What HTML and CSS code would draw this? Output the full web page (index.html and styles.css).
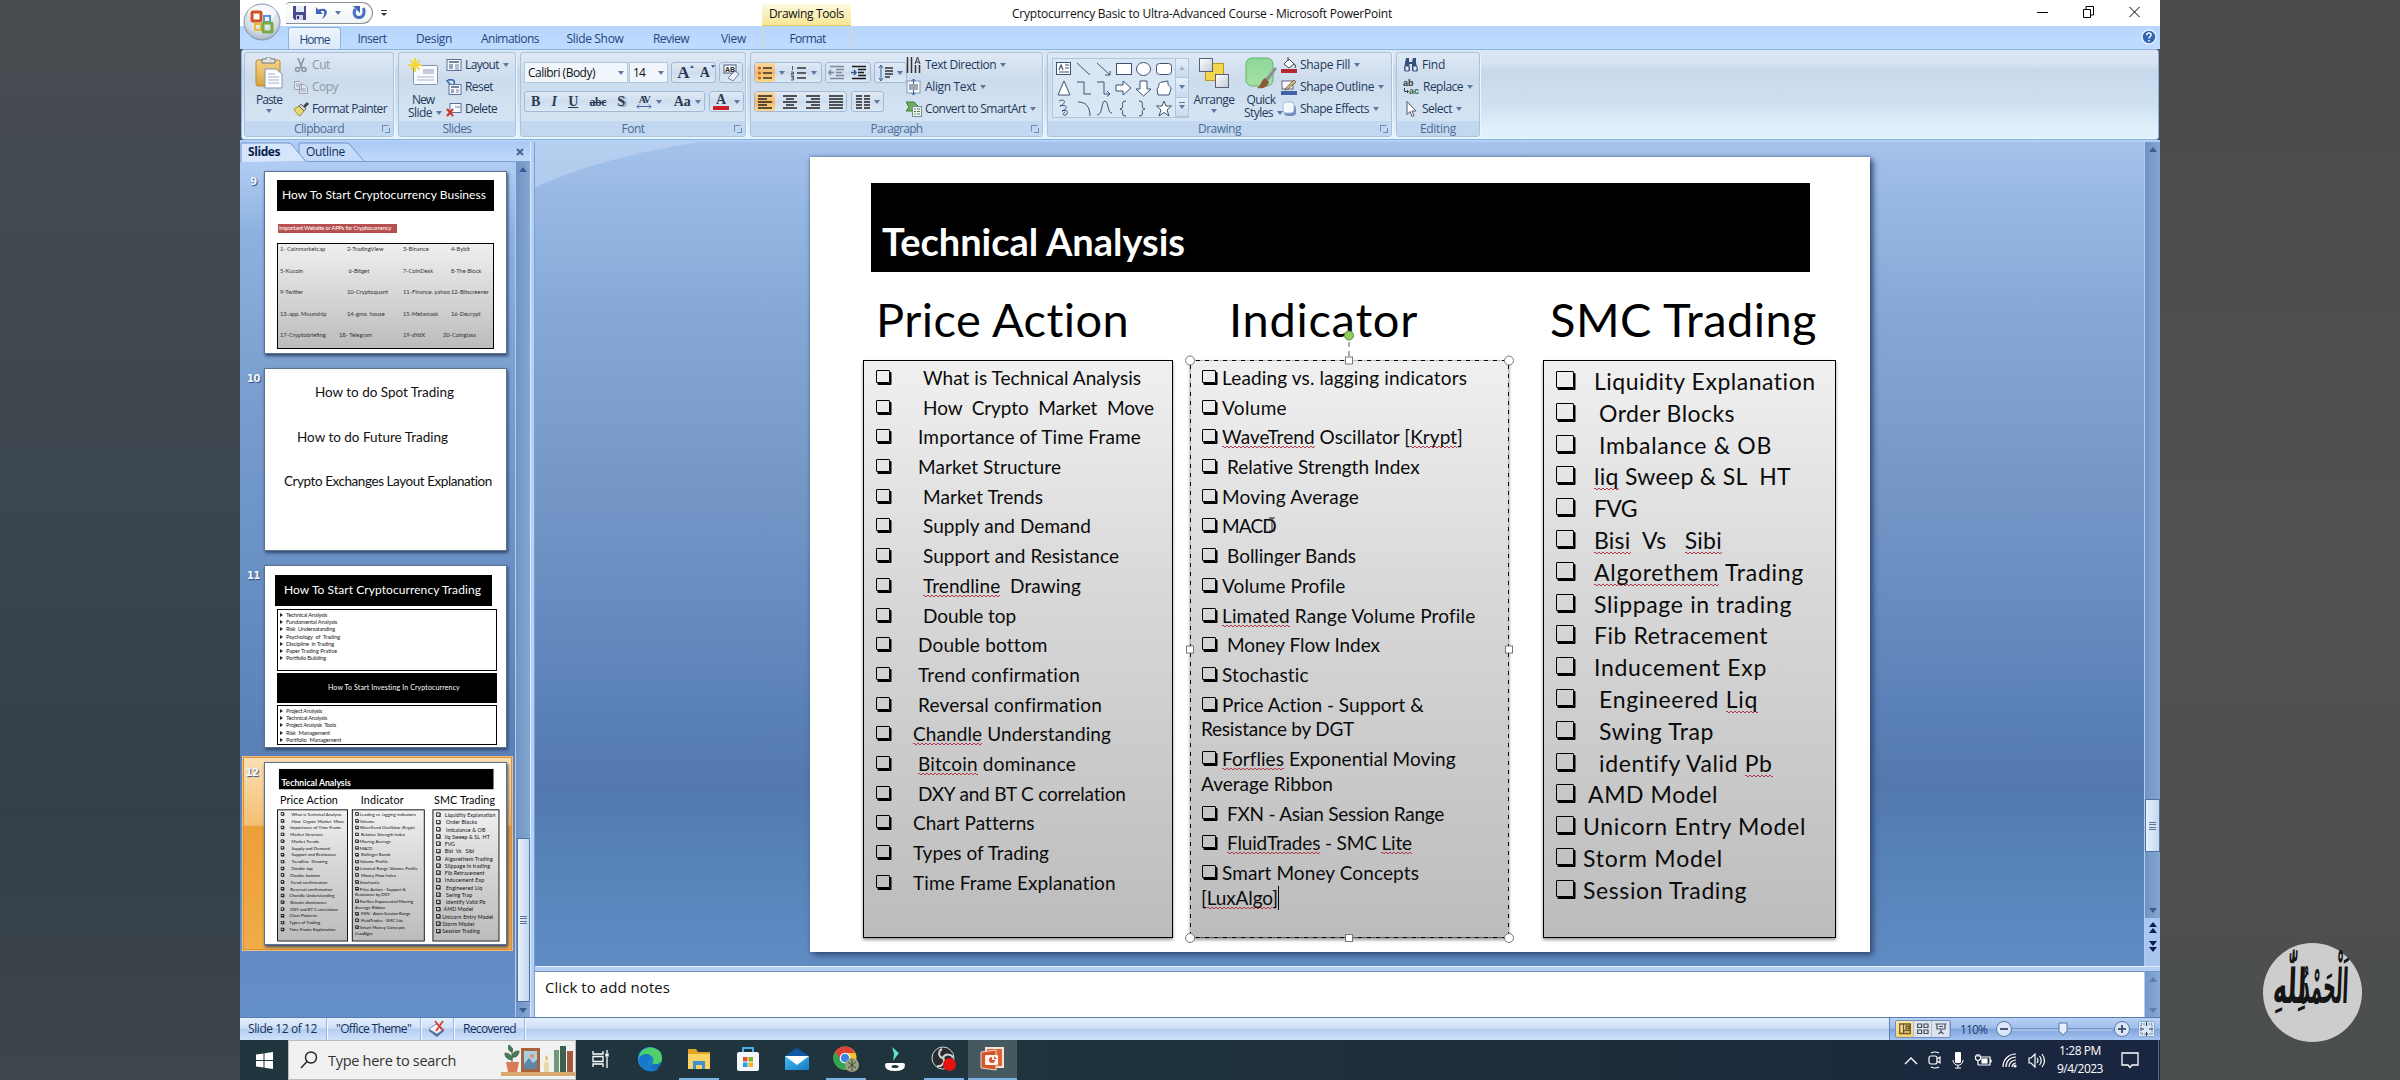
FILE: index.html
```html
<!DOCTYPE html>
<html lang="en">
<head>
<meta charset="utf-8">
<title>Cryptocurrency Basic to Ultra-Advanced Course - Microsoft PowerPoint</title>
<link rel="stylesheet" href="styles.css">
</head>
<body>
<svg width="0" height="0" class="defs">
  <defs>
    <linearGradient id="gGold" x1="0" y1="0" x2="0" y2="1"><stop offset="0" stop-color="#f3d58a"/><stop offset="1" stop-color="#d9a33c"/></linearGradient>
    <linearGradient id="gGreen" x1="0" y1="0" x2="0" y2="1"><stop offset="0" stop-color="#8fd79b"/><stop offset="1" stop-color="#a6e0a2"/></linearGradient>
    <radialGradient id="gOrb" cx=".5" cy=".3" r=".8"><stop offset="0" stop-color="#fff"/><stop offset=".6" stop-color="#d6dde8"/><stop offset="1" stop-color="#8fa2bd"/></radialGradient>
    <linearGradient id="gEdge" x1="0" y1="0" x2="1" y2="1"><stop offset="0" stop-color="#2fb6e8"/><stop offset="1" stop-color="#0b59a8"/></linearGradient>
    <linearGradient id="gMail" x1="0" y1="0" x2="1" y2="1"><stop offset="0" stop-color="#43c0f4"/><stop offset="1" stop-color="#1878c9"/></linearGradient>
    <linearGradient id="gFill" x1="0" y1="0" x2="1" y2="1"><stop offset="0" stop-color="#fff"/><stop offset="1" stop-color="#c3cbd8"/></linearGradient>
  </defs>
</svg>
<div class="stage">
<div class="side side-left"></div>
<div class="screen">

  <header class="titlebar">
    <div class="qat">
      <svg width="16" height="16" viewBox="0 0 16 16"><path d="M1 1h13v14H3l-2-2z" fill="#4b4a8f"/><rect x="4" y="1" width="8" height="6" fill="#e6ecf8"/><rect x="4" y="10" width="7" height="5" fill="#cfd5e6"/><rect x="5" y="11" width="2" height="3" fill="#3b3a78"/></svg>
      <svg width="16" height="16" viewBox="0 0 16 16"><path d="M2 2v7h7L6.500 6.500C10 4 12 8 8 14c7-4 7-13-3.800-9.500z" fill="#3f66b8"/></svg>
      <i class="dd"></i>
      <svg width="16" height="16" viewBox="0 0 16 16"><path d="M4.500 4C2 7 3 12.500 8 12.500S14 7 12.500 3" fill="none" stroke="#4a6fbb" stroke-width="3"/><path d="M2 1h7v7z" fill="#3f66b8"/></svg>
    </div>
    <i class="qat-more"></i>
    <div class="context-title"><span data-w="75">Drawing Tools</span></div>
    <div class="doc-title"><span data-w="380">Cryptocurrency Basic to Ultra-Advanced Course - Microsoft PowerPoint</span></div>
    <div class="winbtns">
      <svg width="12" height="12"><path d="M0 6.500h11" stroke="#000"/></svg>
      <svg width="12" height="12" fill="none" stroke="#000"><path d="M.5 3.500h7v8h-7zM3 3V.5h7.500v8.500H8"/></svg>
      <svg width="12" height="12" fill="none" stroke="#000"><path d="M.5 1l10 10M10.500 1l-10 10"/></svg>
    </div>
    <svg class="office" width="38" height="38" viewBox="0 0 38 38"><circle cx="19" cy="19" r="18" fill="url(#gOrb)" stroke="#8394ad"/><ellipse cx="19" cy="10" rx="14" ry="8" fill="#fff" opacity=".6"/><g fill="none" stroke-width="3"><rect x="9" y="9" width="9" height="9" rx="1" stroke="#cf5327"/><rect x="21" y="13" width="6" height="6" stroke="#5b97d6" stroke-width="2"/><rect x="12" y="21" width="6" height="6" stroke="#e9b93b" stroke-width="2"/><rect x="20" y="20" width="9" height="9" rx="1" stroke="#79ab42"/></g></svg>
  </header>

  <nav class="tabs">
    <div class="tab active t1"><span data-w="30">Home</span></div>
    <div class="tab t2"><span data-w="29">Insert</span></div>
    <div class="tab t3"><span data-w="36">Design</span></div>
    <div class="tab t4"><span data-w="58">Animations</span></div>
    <div class="tab t5"><span data-w="57">Slide Show</span></div>
    <div class="tab t6"><span data-w="36">Review</span></div>
    <div class="tab t7"><span data-w="25">View</span></div>
    <div class="tab t8"><span data-w="36">Format</span></div>
    <svg class="help" width="16" height="16" viewBox="0 0 16 16"><circle cx="8" cy="8" r="7" fill="#3566b0" stroke="#e6f0fc" stroke-width="1.500"/><path d="M5.800 6.200c0-3 4.600-2.800 4.300-.2C10 7.500 8 7.500 8 9.500M8 11v1.500" stroke="#fff" stroke-width="1.500" fill="none"/></svg>
  </nav>

  <section class="ribbon">
    <div class="group g-clip">
      <div class="body">
        <div class="big">
          <svg width="28" height="32" viewBox="0 0 28 32"><rect x="1" y="3" width="24" height="26" rx="2" fill="url(#gGold)" stroke="#b98a3a"/><path d="M7 6V2h4c0-3 5-3 5 0h4v4z" fill="#dfe3e8" stroke="#777"/><path d="M10 12h11l6 5v14H10z" fill="#fff" stroke="#8395b5"/><path d="M13 17h7M13 20h11M13 23h11M13 26h11" stroke="#9db1d2"/></svg>
          <span data-w="26">Paste</span><i class="dd"></i>
        </div>
        <div class="col">
          <div class="cmd off"><svg width="16" height="16" viewBox="0 0 16 16" fill="none" stroke="#8d93a3" stroke-width="1.600"><path d="M5 1l4 10M11 1L7 11"/><circle cx="4.500" cy="12.500" r="2"/><circle cx="11" cy="12.500" r="2"/></svg><span data-w="18">Cut</span></div>
          <div class="cmd off"><svg width="16" height="16" viewBox="0 0 16 16" fill="#e2e7ef" stroke="#9aa1b0"><path d="M1.500 2.500h5l2 2v6h-7zM6.500 5.500h5l3 3v6h-8z"/><path d="M8 10h5M8 12h5M3 5h3M3 7h3"/></svg><span data-w="26">Copy</span></div>
          <div class="cmd"><svg width="16" height="16" viewBox="0 0 16 16"><path d="M1 8l5-3 5 5-4 5c-2-1-4-3-6-7z" fill="#e9d86a" stroke="#8a7a2a" stroke-width=".8"/><path d="M6 5l2-2 5 5-2 2z" fill="#cfd4dd" stroke="#555" stroke-width=".8"/><path d="M10 5l4-4 2 2-4 4z" fill="#444"/></svg><span data-w="75">Format Painter</span></div>
        </div>
      </div>
      <div class="cap"><span data-w="50">Clipboard</span><b class="launch"></b></div>
    </div>

    <div class="group g-slides">
      <div class="body">
        <div class="big">
          <svg width="32" height="32" viewBox="0 0 32 32"><rect x="6.500" y="8.500" width="24" height="19" rx="1" fill="#f8fafd" stroke="#7f92b4"/><rect x="16" y="12" width="11" height="5" fill="#c5cbd8"/><path d="M10 20h17M10 23h17" stroke="#a9b4c8"/><path d="M8 1v14M1 8h14M3.500 3.500l9 9M12.500 3.500l-9 9" stroke="#f2d83c" stroke-width="2"/></svg>
          <span data-w="22">New</span><div class="row"><span data-w="24">Slide</span><i class="dd"></i></div>
        </div>
        <div class="col">
          <div class="cmd"><svg width="16" height="16" viewBox="0 0 16 16"><rect x="1" y="2.500" width="14" height="11" fill="#f6f8fc" stroke="#5f7396"/><path d="M3 5h10" stroke="#4a5f86" stroke-width="1.500"/><rect x="3" y="7" width="4" height="5" fill="#9aa7bf"/><path d="M9 8h4M9 10h4M9 12h4" stroke="#7385a5"/></svg><span data-w="34">Layout</span><i class="dd"></i></div>
          <div class="cmd"><svg width="16" height="16" viewBox="0 0 16 16"><rect x="3" y="5.500" width="12" height="10" fill="#f6f8fc" stroke="#5f7396"/><path d="M5 8h8" stroke="#4a5f86" stroke-width="1.500"/><rect x="5" y="10" width="3" height="4" fill="#9aa7bf"/><path d="M10 11h3M10 13h3" stroke="#7385a5"/><path d="M3 1C8 0 9 2 8 5M4 0L1 2l3 3" stroke="#3a62a8" stroke-width="1.500" fill="none"/></svg><span data-w="28">Reset</span></div>
          <div class="cmd"><svg width="16" height="16" viewBox="0 0 16 16"><rect x="4" y="2.500" width="11" height="9" fill="#f6f8fc" stroke="#5f7396"/><path d="M9 6h5" stroke="#7385a5"/><path d="M1 8l6 7M7 8l-6 7" stroke="#d3342b" stroke-width="2"/></svg><span data-w="32">Delete</span></div>
        </div>
      </div>
      <div class="cap"><span data-w="29">Slides</span></div>
    </div>

    <div class="group g-font">
      <div class="body stack">
        <div class="row r1">
          <div class="combo c-name"><span data-w="67">Calibri (Body)</span><i class="dd"></i></div>
          <div class="combo c-size"><span data-w="12">14</span><i class="dd"></i></div>
          <div class="bg bg-a"><b class="ser a1">A<i class="up"></i></b><b class="ser a2">A<i class="up dn"></i></b></div>
          <div class="bg bg-clr"><svg width="18" height="18" viewBox="0 0 18 18"><rect x="1" y="1" width="12" height="8" fill="#fff" stroke="#445a80"/><text x="2" y="8" class="tinyAa">AB</text><path d="M5 14l7-7 4 3-6 7z" fill="#eef2f8" stroke="#6b7fa3"/></svg></div>
        </div>
        <div class="row r2">
          <div class="bg bg-style">
            <b class="ser">B</b><b class="ser it">I</b><b class="ser un">U</b><b class="ser st">abc</b><b class="ser sh">S</b>
            <div class="av"><b class="ser">AV</b><svg width="16" height="5"><path d="M3 .5L1 2.500l2 2M13 .5l2 2-2 2M1 2.500h14" stroke="#3f66a8" fill="none"/></svg></div><i class="dd"></i>
            <b class="ser aa">Aa</b><i class="dd"></i>
          </div>
          <div class="bg bg-color"><div class="fc"><b class="ser">A</b></div><i class="dd"></i></div>
        </div>
      </div>
      <div class="cap"><span data-w="23">Font</span><b class="launch"></b></div>
    </div>

    <div class="group g-para">
      <div class="body">
        <div class="stack">
          <div class="row r1">
            <div class="bg p1"><div class="hot"><svg width="16" height="16" viewBox="0 0 16 16"><path d="M6 3h9M6 8h9M6 13h9" stroke="#333" stroke-width="1.500"/><g fill="#b4682a"><circle cx="2.500" cy="3" r="1.600"/><circle cx="2.500" cy="8" r="1.600"/><circle cx="2.500" cy="13" r="1.600"/></g></svg></div><i class="dd"></i><svg width="17" height="16" viewBox="0 0 17 16"><path d="M7 3h9M7 8h9M7 13h9" stroke="#333" stroke-width="1.500"/><path d="M2.500 1v4M1 7h2.500v1.500H1.500V10H4M1 11.500h2.500V15H1M1.500 13h2" stroke="#445" fill="none" stroke-width=".9"/></svg><i class="dd"></i></div>
            <div class="bg p2"><svg width="18" height="16" viewBox="0 0 18 16" stroke="#7e8899"><path d="M2 1.500h14M8 4.500h8M8 7.500h6M8 10.500h8M2 13.500h14" stroke-width="1.300"/><path d="M6 7.500H1M3 5L1 7.500 3 10" fill="none" stroke-width="1.500"/></svg><svg width="18" height="16" viewBox="0 0 18 16" stroke="#1a1a1a"><path d="M2 1.500h14M8 4.500h8M8 7.500h6M8 10.500h8M2 13.500h14" stroke-width="1.500"/><path d="M1 7.500h5M4 5l2 2.500L4 10" fill="none" stroke="#33558f" stroke-width="1.500"/></svg></div>
            <div class="bg p3"><svg width="16" height="18" viewBox="0 0 16 18"><path d="M3 2v14M1 4l2-3 2 3M1 14l2 3 2-3" stroke="#3f5f96" fill="none"/><path d="M7 4h8M7 7h8M7 10h8M7 13h5" stroke="#333" stroke-width="1.500"/></svg><i class="dd"></i></div>
          </div>
          <div class="row r2">
            <div class="bg p4"><div class="hot"><svg width="16" height="16" stroke="#222" stroke-width="1.500"><path d="M1 2h14M1 5h9M1 8h14M1 11h9M1 14h14"/></svg></div><svg width="16" height="16" stroke="#222" stroke-width="1.500"><path d="M1 2h14M4 5h8M1 8h14M4 11h8M1 14h14"/></svg><svg width="16" height="16" stroke="#222" stroke-width="1.500"><path d="M1 2h14M6 5h9M1 8h14M6 11h9M1 14h14"/></svg><svg width="16" height="16" stroke="#222" stroke-width="1.500"><path d="M1 2h14M1 5h14M1 8h14M1 11h14M1 14h14"/></svg></div>
            <div class="bg p5"><svg width="15" height="16" stroke="#222" stroke-width="1.500"><path d="M1 2h6M1 5h6M1 8h6M1 11h6M1 14h6M9 2h6M9 5h6M9 8h6M9 11h6M9 14h6"/></svg><i class="dd"></i></div>
          </div>
        </div>
        <div class="col">
          <div class="cmd"><svg width="16" height="16" viewBox="0 0 16 16"><path d="M1.500 0v16M5.500 0v16M9.500 8v8M13.500 8v8" stroke="#333" stroke-width="1.500"/><path d="M9 7l2.500-7L14 7M10 5h3" stroke="#333" fill="none"/></svg><span data-w="71">Text Direction</span><i class="dd"></i></div>
          <div class="cmd"><svg width="16" height="16" viewBox="0 0 16 16"><rect x="1" y="2" width="13" height="12" fill="#f6f8fc" stroke="#8395b5"/><path d="M3 6h9M3 8h9M3 10h9" stroke="#456"/><path d="M7.500 0v5M5.500 2l2-2 2 2M7.500 16v-5M5.500 14l2 2 2-2" stroke="#3f5f96" fill="none"/></svg><span data-w="51">Align Text</span><i class="dd"></i></div>
          <div class="cmd"><svg width="16" height="16" viewBox="0 0 16 16"><path d="M0 1h8l4 4-4 5H0l3-4z" fill="#6fae5a" stroke="#3f7a35"/><rect x="6.500" y="5.500" width="9" height="10" fill="#f2f7f0" stroke="#7a8a9c"/><path d="M8 8h2M11 8h3M8 10.500h2M11 10.500h3M8 13h2M11 13h3" stroke="#4d8a45"/></svg><span data-w="101">Convert to SmartArt</span><i class="dd"></i></div>
        </div>
      </div>
      <div class="cap"><span data-w="52">Paragraph</span><b class="launch"></b></div>
    </div>

    <div class="group g-draw">
      <div class="body">
        <div class="gallery">
          <svg width="122" height="59" viewBox="0 0 122 59" fill="none" stroke="#3c5274">
            <rect x="3.500" y="3.500" width="14" height="12" fill="#fff"/><path d="M6 11l2-5 2 5M12 6h4M12 9h4M6 13h10" stroke-width="1.200"/>
            <path d="M24 4l13 12M44 4l13 12M57 12v4h-5"/>
            <g fill="#fff"><rect x="63.500" y="4.500" width="15" height="11"/><ellipse cx="90.500" cy="10" rx="7" ry="6.500"/><rect x="103.500" y="4.500" width="15" height="11" rx="3"/>
            <path d="M11 22l6 14H5zM63 26h7v-4l8 7-8 7v-4h-7zM87 22h7v8h4l-7.500 7-7.500-7h4zM104 30c3-2 0-6 5-7l6-1c-1 5 3 5 3 8l-2 6h-11z"/></g>
            <path d="M24 23h7v12h7M44 23h7v12h6M54 32l3 3-3 2.500"/>
            <path d="M6 42c6-3 8 2 1 5 7-2 9 2 2 5 5-2 7 1 4 4-3 1-4-2-1-3M25 43c8 0 12 5 12 14M44 56c6 0 4-14 8-14 4 1 2 12 7 12M73 42c-7 0 0 7-6 8 6 1-1 7 6 7M86 42c7 0 0 7 6 8-6 1 1 7-6 7"/>
            <path d="M111 42l2 5h5.500l-4.500 4 2 6-5-3.500-5 3.500 2-6-4.500-4h5.500z" fill="#fff"/>
          </svg>
          <div class="gscroll"><div><i class="ga"></i></div><div><i class="dd"></i></div><div><i class="dd bar"></i></div></div>
        </div>
        <div class="big arr">
          <svg width="32" height="32" viewBox="0 0 32 32"><rect x="7.500" y="6.500" width="18" height="17" fill="#f3d64a" stroke="#b89a20"/><rect x="1.500" y="1.500" width="13" height="13" fill="url(#gFill)" stroke="#56627a"/><rect x="17.500" y="17.500" width="13" height="13" fill="url(#gFill)" stroke="#56627a"/></svg>
          <span data-w="41">Arrange</span><i class="dd"></i>
        </div>
        <div class="big qs">
          <svg width="32" height="32" viewBox="0 0 32 32"><rect x="1" y="1" width="27" height="28" rx="6" fill="url(#gGreen)" stroke="#62b26b"/><path d="M30 10l2 2-9 12-3-2z" fill="#8b8f96"/><path d="M20 21l4 4c-2 6-7 7-12 6 4-2 4-8 8-10z" fill="#8a5a35"/></svg>
          <span data-w="29">Quick</span><div class="row"><span data-w="29">Styles</span><i class="dd"></i></div>
        </div>
        <div class="col">
          <div class="cmd"><svg width="16" height="16" viewBox="0 0 16 16"><path d="M3 7l5-5 5 5-5 4z" fill="#fff" stroke="#445"/><path d="M7 4V0M13 7c2 1 2 3 1 4" stroke="#445" fill="none"/><rect x="0" y="12" width="16" height="4" fill="#b5282e"/></svg><span data-w="50">Shape Fill</span><i class="dd"></i></div>
          <div class="cmd"><svg width="16" height="16" viewBox="0 0 16 16"><rect x="1" y="2" width="11" height="8" fill="#f6f8fc" stroke="#667"/><path d="M5 9l8-8 2 2-8 7-3 1z" fill="#e2b765" stroke="#555" stroke-width=".8"/><rect x="0" y="12" width="16" height="4" fill="#3f64a6"/></svg><span data-w="74">Shape Outline</span><i class="dd"></i></div>
          <div class="cmd"><svg width="16" height="16" viewBox="0 0 16 16"><rect x="3" y="4" width="12" height="11" rx="4" fill="#6d8dbf"/><rect x="2" y="1" width="11" height="11" rx="3" fill="#f4f8fd" stroke="#a8bad6"/></svg><span data-w="69">Shape Effects</span><i class="dd"></i></div>
        </div>
      </div>
      <div class="cap"><span data-w="43">Drawing</span><b class="launch"></b></div>
    </div>

    <div class="group g-edit">
      <div class="body">
        <div class="col">
          <div class="cmd"><svg width="16" height="16" viewBox="0 0 16 16"><path d="M3 1h3v4l1 9H1l1-8zM10 1h3v5l2 8H9V5z" fill="#35507e"/><path d="M2 9h4v5H2zM10 9h4v5h-4z" fill="#dfe8f5" stroke="#35507e"/><path d="M6 6h4" stroke="#35507e" stroke-width="2"/></svg><span data-w="23">Find</span></div>
          <div class="cmd"><svg width="17" height="16" viewBox="0 0 17 16"><text x="0" y="7" class="ab">ab</text><text x="6" y="15" class="ab g">ac</text><path d="M1.500 9v3.500h4M4 11l1.500 1.500L4 14" stroke="#345" fill="none"/></svg><span data-w="40">Replace</span><i class="dd"></i></div>
          <div class="cmd"><svg width="16" height="16" viewBox="0 0 16 16"><path d="M4 .5v13l3-3 2 5 2-1-2-4.500h4z" fill="#fff" stroke="#556"/></svg><span data-w="30">Select</span><i class="dd"></i></div>
        </div>
      </div>
      <div class="cap"><span data-w="36">Editing</span></div>
    </div>
  </section>

  <main class="work">
    <aside class="pane">
      <div class="pane-tabs">
        <svg class="ptbg" width="130" height="20" viewBox="0 0 130 20"><path d="M59 19V3q0-2 2-2h45q3 0 5 3l13 15" fill="#c3dafa" stroke="#7296cb"/><path d="M1 20V3q0-2 2-2h45q3 0 5 3l13 15.500" fill="#d5e5fb" stroke="#7296cb"/></svg>
        <span class="pt-on" data-w="32">Slides</span><span class="pt-off" data-w="39">Outline</span>
        <svg class="pclose" width="8" height="8"><path d="M1 1l6 6M7 1L1 7" stroke="#4a6591" stroke-width="2"/></svg>
      </div>
      <div class="pane-body">
        <div class="thumbs">
          <div class="trow"><b class="num">9</b>
            <div class="thumb th9">
              <div class="tt"><span data-w="204">How To Start Cryptocurrency Business</span></div>
              <div class="red"><span data-w="112">Important Website or APPs for Cryptocurrency</span></div>
              <div class="grid9">
                <span>1- Coinmarketcap</span><span>2-TradingView</span><span>3-Binance</span><span>4-Bybit</span>
                <span>5-Kucoin</span><span>&nbsp;6-Bitget</span><span>7-CoinDesk</span><span>8-The Block</span>
                <span>9-Twitter</span><span>10-Cryptoquant</span><span>11-Finance. yahoo</span><span>12-Bitscreener</span>
                <span>13-app. Muunship</span><span>14-gmx. house</span><span>15-Metamask</span><span>16-Decrypt</span>
                <span>17-Cryptobriefing</span><span class="b1l">18- Telegram</span><span>19-dYdX</span><span class="b1l">20-Coinglass</span>
              </div>
            </div>
          </div>
          <div class="trow"><b class="num">10</b>
            <div class="thumb th10">
              <span class="l1" data-w="139">How to do Spot Trading</span>
              <span class="l2" data-w="151">How to do Future Trading</span>
              <span class="l3" data-w="208">Crypto Exchanges Layout Explanation</span>
            </div>
          </div>
          <div class="trow"><b class="num">11</b>
            <div class="thumb th11">
              <div class="tt"><span data-w="197">How To Start Cryptocurrency Trading</span></div>
              <ul class="ml"><li data-w="41">Technical Analysis</li><li data-w="51">Fundamental Analysis</li><li data-w="49">Risk  Undersatanding</li><li data-w="54">Psychology  of  Trading</li><li data-w="48">Discipline  in Trading</li><li data-w="51">Paper Trading Pratice</li><li data-w="40">Portfolio Building</li></ul>
              <div class="tt2"><span data-w="132">How To Start Investing In Cryptocurrency</span></div>
              <ul class="ml m2"><li data-w="36">Project Analysis</li><li data-w="41">Technical Analysis</li><li data-w="50">Project Analysis  Tools</li><li data-w="44">Risk  Management</li><li data-w="55">Portfolio  Management</li></ul>
            </div>
          </div>
          <div class="trow sel"><b class="num">12</b>
            <div class="thumb th12" id="mini"></div>
          </div>
        </div>
        <div class="vscroll pv"><i class="ar up2"></i><div class="vthumb"></div><i class="ar dn2"></i></div>
      </div>
    </aside>
    <div class="vsplit"></div>
    <section class="right">
      <div class="canvas">
        <svg class="swoosh" width="420" height="130" viewBox="0 0 420 130"><path d="M0 0H165C100 10 40 26 0 46z" fill="#d3e4fb" opacity=".4"/></svg>
        <div class="slide" id="slide">
          <div class="s-title"><span data-w="303">Technical Analysis</span></div>
          <div class="s-h h1"><span data-w="254">Price Action</span></div>
          <div class="s-h h2"><span data-w="189">Indicator</span></div>
          <div class="s-h h3"><span data-w="267">SMC Trading</span></div>
          <ul class="box b1">
            <li><i></i><span class="n3" data-w="218">What is Technical Analysis</span></li>
            <li><i></i><span class="n3" data-w="231">How  Crypto  Market  Move</span></li>
            <li><i></i><span class="n2" data-w="223">Importance of Time Frame</span></li>
            <li><i></i><span class="n2" data-w="143">Market Structure</span></li>
            <li><i></i><span class="n3" data-w="120">Market Trends</span></li>
            <li><i></i><span class="n3" data-w="168">Supply and Demand</span></li>
            <li><i></i><span class="n3" data-w="196">Support and Resistance</span></li>
            <li><i></i><span class="n3" data-w="158"><u>Trendline</u>  Drawing</span></li>
            <li><i></i><span class="n3" data-w="93">Double top</span></li>
            <li><i></i><span class="n2" data-w="129">Double bottom</span></li>
            <li><i></i><span class="n2" data-w="162">Trend confirmation</span></li>
            <li><i></i><span class="n2" data-w="184">Reversal confirmation</span></li>
            <li><i></i><span class="n1" data-w="198"><u>Chandle</u> Understanding</span></li>
            <li><i></i><span class="n2" data-w="158"><u>Bitcoin</u> dominance</span></li>
            <li><i></i><span class="n2" data-w="208">DXY and BT C correlation</span></li>
            <li><i></i><span class="n1" data-w="121">Chart Patterns</span></li>
            <li><i></i><span class="n1" data-w="136">Types of Trading</span></li>
            <li><i></i><span class="n1" data-w="203">Time Frame Explanation</span></li>
          </ul>
          <ul class="box b2">
            <li><i></i><span data-w="245">Leading vs. lagging indicators</span></li>
            <li><i></i><span data-w="65">Volume</span></li>
            <li><i></i><span data-w="241"><u>WaveTrend</u> Oscillator [<u>Krypt</u>]</span></li>
            <li><i></i><span class="n1" data-w="193">Relative Strength Index</span></li>
            <li><i></i><span data-w="137">Moving Average</span></li>
            <li><i></i><span data-w="54">MACD</span></li>
            <li><i></i><span class="n1" data-w="129">Bollinger Bands</span></li>
            <li><i></i><span data-w="123">Volume Profile</span></li>
            <li><i></i><span data-w="253"><u>Limated</u> Range Volume Profile</span></li>
            <li><i></i><span class="n1" data-w="153">Money Flow Index</span></li>
            <li><i></i><span data-w="87">Stochastic</span></li>
            <li><i></i><span data-w="202">Price Action - Support &amp;</span></li>
            <li class="cont"><span data-w="153">Resistance by DGT</span></li>
            <li><i></i><span data-w="234"><u>Forflies</u> Exponential Moving</span></li>
            <li class="cont"><span data-w="132">Average Ribbon</span></li>
            <li><i></i><span class="n1" data-w="217">FXN - Asian Session Range</span></li>
            <li><i></i><span class="n1" data-w="185"><u>FluidTrades</u> - SMC <u>Lite</u></span></li>
            <li><i></i><span data-w="197">Smart Money Concepts</span></li>
            <li class="cont"><span data-w="77">[<u>LuxAlgo</u>]</span><em class="caret"></em></li>
          </ul>
          <ul class="box b3">
            <li><i></i><span class="n3" data-w="222">Liquidity Explanation</span></li>
            <li><i></i><span class="n4" data-w="136">Order Blocks</span></li>
            <li><i></i><span class="n4" data-w="173">Imbalance &amp; OB</span></li>
            <li><i></i><span class="n3" data-w="197"><u>liq</u> Sweep &amp; SL  HT</span></li>
            <li><i></i><span class="n3" data-w="43">FVG</span></li>
            <li><i></i><span class="n3" data-w="128"><u>Bisi</u>  Vs   <u>Sibi</u></span></li>
            <li><i></i><span class="n3" data-w="210"><u>Algorethem</u> Trading</span></li>
            <li><i></i><span class="n3" data-w="198">Slippage in trading</span></li>
            <li><i></i><span class="n3" data-w="174">Fib Retracement</span></li>
            <li><i></i><span class="n3" data-w="173">Inducement Exp</span></li>
            <li><i></i><span class="n4" data-w="159">Engineered <u>Liq</u></span></li>
            <li><i></i><span class="n4" data-w="115">Swing Trap</span></li>
            <li><i></i><span class="n4" data-w="174">identify Valid <u>Pb</u></span></li>
            <li><i></i><span class="n2" data-w="130">AMD Model</span></li>
            <li><i></i><span data-w="223">Unicorn Entry Model</span></li>
            <li><i></i><span data-w="140">Storm Model</span></li>
            <li><i></i><span data-w="164">Session Trading</span></li>
          </ul>
          <svg class="handles" width="340" height="620" viewBox="0 0 340 620">
            <path d="M170 30V12" stroke="#555" stroke-dasharray="5 4"/>
            <path d="M12 34.500h317M12 612h317" stroke="#bbb" stroke-dasharray="5 4"/>
            <path d="M11.500 34v578M329.500 34v578" stroke="#bbb" stroke-dasharray="5 4"/>
            <g fill="#fff" stroke="#777"><circle cx="11" cy="34.500" r="4.500"/><circle cx="330" cy="34.500" r="4.500"/><circle cx="11" cy="612" r="4.500"/><circle cx="330" cy="612" r="4.500"/><rect x="166.500" y="31" width="7" height="7"/><rect x="166.500" y="608.500" width="7" height="7"/><rect x="7.500" y="320" width="7" height="7"/><rect x="326.500" y="320" width="7" height="7"/></g>
            <circle cx="170" cy="9.500" r="4.500" fill="#8fce5a" stroke="#5f8a4a"/>
            <path d="M90 192h6M93 192v13M90 205h6" stroke="#222" fill="none"/>
          </svg>
        </div>
      </div>
      <div class="vscroll mv"><i class="ar up2"></i><div class="vthumb"></div><i class="ar dn2"></i><div class="nav"><svg width="12" height="36" viewBox="0 0 12 36" fill="#0c1c4c"><path d="M6 3l4 5H2zM6 9l4 5H2zM2 22h8l-4 5zM2 28h8l-4 5z"/></svg></div></div>
      <div class="hsplit"></div>
      <div class="notes"><span data-w="125">Click to add notes</span></div>
      <div class="vscroll nv"><i class="ar up2"></i><i class="ar dn2"></i></div>
    </section>
  </main>

  <footer class="status">
    <div class="s1"><span data-w="69">Slide 12 of 12</span></div>
    <div class="s2"><span data-w="75">"Office Theme"</span></div>
    <div class="s3"><svg width="18" height="18" viewBox="0 0 18 18"><path d="M1 9l8 5 7-5v2l-7 6-8-6z" fill="#4e6ea5"/><path d="M1 9l7-5 8 5-7 5z" fill="#f4f6fa" stroke="#7f8fae"/><path d="M7 1l8 10M15 1L8 11" stroke="#d5402f" stroke-width="1.800"/></svg></div>
    <div class="s4"><span data-w="53">Recovered</span></div>
    <div class="s5">
      <div class="views"><div class="von"><svg width="12" height="12" fill="none" stroke="#6b5a2c" stroke-width="1.300"><path d="M.7 1h10.600v9.500H.7zM4.500 1v9.500M4.500 7.500h6.800M7 3h3v2.500H7z"/></svg></div><div><svg width="12" height="12" fill="none" stroke="#4a5260" stroke-width="1.200"><path d="M.6 1h4v3.500h-4zM7 1h4v3.500H7zM.6 7h4v3.500h-4zM7 7h4v3.500H7z"/></svg></div><div><svg width="12" height="12" fill="none" stroke="#4a5260" stroke-width="1.200"><path d="M.5 1h11M2 1v5h8V1M4 3.500h4M6 6v4M3.500 11L6 8.500 8.500 11"/></svg></div></div>
      <span class="pct" data-w="27">110%</span>
      <svg width="136" height="20" viewBox="0 0 136 20"><path d="M17 10h100" stroke="#5a7cb5"/><path d="M17 11h100" stroke="#d6e5fb"/><g fill="#dbe7f7" stroke="#5d779f"><circle cx="9" cy="10" r="7.500"/><circle cx="127" cy="10" r="7.500"/></g><path d="M5 10h8M123 10h8M127 6v8" stroke="#44587c" stroke-width="2"/><path d="M64 4h8v8l-4 4-4-4z" fill="#e8f0fb" stroke="#5d779f"/></svg>
      <svg class="fitico" width="17" height="17" viewBox="0 0 17 17"><rect x=".5" y=".5" width="16" height="15" rx="1" fill="#d8e6fa" stroke="#8ba6cf"/><rect x="3" y="3" width="11" height="10" fill="none" stroke="#334" stroke-dasharray="1 1.500"/><path d="M8.500 1v4M8.500 11v4M2 8h4M11 8h4" stroke="#334"/></svg>
    </div>
  </footer>

  <div class="taskbar">
    <div class="start"><svg width="17" height="17" viewBox="0 0 17 17" fill="#fff"><path d="M0 2.500l7.500-1V8H0zM8.500 1.300L17 0v8H8.500zM0 9h7.500v6.500l-7.500-1zM8.500 9H17v8l-8.500-1.200z"/></svg></div>
    <div class="search">
      <svg width="20" height="20" viewBox="0 0 20 20" fill="none" stroke="#222" stroke-width="1.400"><circle cx="12" cy="7.500" r="5.500"/><path d="M8 11.500L2 18"/></svg>
      <span data-w="128">Type here to search</span>
      <svg class="ill" width="74" height="36" viewBox="0 0 74 36"><rect x="0" y="30" width="74" height="4" fill="#d9a86c"/><path d="M5 20h13l-2 10H7z" fill="#d97b54"/><path d="M11 20V6M11 18C4 17 4 13 4 11c4 0 7 3 7 7M11 15c0-5 4-6 7-6 0 4-3 7-7 6M11 10C7 9 7 6 8 3c3 2 4 4 3 7" stroke="#3f6b4c" fill="#4b7c58"/><rect x="20" y="6" width="19" height="24" fill="#a5643b"/><rect x="23" y="9" width="13" height="18" fill="#a9cfe3"/><path d="M23 22l5-6 4 5 4-3v9H23z" fill="#5d87a8"/><circle cx="31" cy="14" r="2" fill="#f08b5c"/><rect x="43" y="20" width="5" height="10" fill="#ead9a8"/><path d="M45.500 13c-2 3-1 5 0 6 1-1 2-3 0-6" fill="#f0b23c"/><rect x="53" y="8" width="5" height="22" fill="#6f9a7a"/><rect x="59" y="4" width="6" height="26" fill="#3f5f50"/><rect x="66" y="9" width="6" height="21" fill="#a5583c"/></svg>
    </div>
    <div class="app"><svg width="18" height="18" viewBox="0 0 18 18" fill="none" stroke="#fff" stroke-width="1.300"><path d="M1 1v3h10V1M1 17v-3h10v3M1 6.500h10v5H1zM15 0v3M15 7v11"/><rect x="14" y="4" width="2" height="2" fill="#fff"/></svg></div>
    <div class="app"><svg width="26" height="26" viewBox="0 0 26 26"><circle cx="13" cy="13" r="12" fill="url(#gEdge)"/><path d="M3 8C8-2 26 0 25 13c0 5-7 6-10 4 3-3 1-8-4-8-4 0-8 2-9 5z" fill="#4fd06a"/><path d="M2 12c3-6 13-5 13 1-3 0-5 2-4 5 1 4 6 6 11 4C16 29 2 25 2 12z" fill="#1878cc"/></svg></div>
    <div class="app on"><svg width="24" height="22" viewBox="0 0 24 22"><path d="M1 1h8l2 3h12v17H1z" fill="#e0a428"/><path d="M1 6h22v15H1z" fill="#f9d465"/><path d="M6 21v-8h12v8h-3v-4H9v4z" fill="#3f8fd6"/></svg></div>
    <div class="app"><svg width="24" height="26" viewBox="0 0 24 26"><path d="M7 7V2h10v5" fill="none" stroke="#46b2ea" stroke-width="2"/><rect x="1" y="6" width="22" height="19" rx="2" fill="#f4f8fb"/><path d="M7 11h4.500v4.500H7z" fill="#e9512c"/><path d="M12.500 11H17v4.500h-4.500z" fill="#7db72b"/><path d="M7 16.500h4.500V21H7z" fill="#22a2e6"/><path d="M12.500 16.500H17V21h-4.500z" fill="#f7b41a"/></svg></div>
    <div class="app"><svg width="26" height="24" viewBox="0 0 26 24"><path d="M1 9l12-8 12 8v14H1z" fill="#0f58a6"/><path d="M1 9h24v14H1z" fill="url(#gMail)"/><path d="M1 9l12 9 12-9z" fill="#fff"/></svg></div>
    <div class="app on"><svg width="26" height="26" viewBox="0 0 26 26"><circle cx="12" cy="12" r="11.500" fill="#f4c430"/><path d="M12 .5A11.500 11.500 0 0 0 2 6l5 9 5-8h10A11.500 11.500 0 0 0 12 .5z" fill="#de4236"/><path d="M2 6a11.500 11.500 0 0 0 10 17.500l5-9-8 1z" fill="#2ea653"/><circle cx="12" cy="12" r="5.300" fill="#fff"/><circle cx="12" cy="12" r="4.200" fill="#3f80ea"/><circle cx="19" cy="19" r="7" fill="#9aa07f"/><path d="M19 13v12M15 16l4 3 4-3M15 22l4-3 4 3" stroke="#3f4a38" fill="none"/></svg></div>
    <div class="app"><svg width="22" height="26" viewBox="0 0 22 26"><path d="M8 1l7 6-6 8 1-7z" fill="#5fe0c8"/><path d="M1 19q0-2 2-2h16q2 0 2 2 0 6-10 6T1 19z" fill="#fff"/><ellipse cx="11" cy="20.500" rx="3.500" ry="1.500" fill="#1c3540"/></svg></div>
    <div class="app on"><svg width="26" height="26" viewBox="0 0 26 26"><circle cx="12" cy="12" r="11" fill="#2b2b2f" stroke="#cfd3d6"/><path d="M12 12C7 11 7 5 11 3M12 12c2-5 9-4 10 0M12 12c3 4-1 9-6 8" stroke="#cfd3d6" fill="none" stroke-width="2"/><circle cx="18.500" cy="18.500" r="6.500" fill="#e81212"/></svg></div>
    <div class="app on cur"><svg width="26" height="26" viewBox="0 0 26 26"><path d="M5 1h19v21H5z" fill="#f6e2d6"/><path d="M7 3h15v17H7z" fill="#d9663a"/><path d="M1 6l15-2v20L1 22z" fill="#d2552b" stroke="#f5d6c6"/><rect x="5" y="9" width="13" height="10" rx="1" fill="#fdf3ec"/><path d="M12 11a3 3 0 1 0 3 3h-3zM14 10v3h3" fill="#d2552b"/></svg></div>
    <div class="tray">
      <svg width="14" height="9" fill="none" stroke="#fff" stroke-width="1.400"><path d="M1 8l6-6 6 6"/></svg>
      <svg width="14" height="18" viewBox="0 0 14 18" fill="none" stroke="#fff" stroke-width="1.200"><path d="M3 2q4-2 8 0M3 16q4 2 8 0"/><rect x="1" y="5" width="8" height="8" rx="2"/><path d="M9 8l3-2v6l-3-2"/></svg>
      <svg width="12" height="18" viewBox="0 0 12 18"><rect x="3" y="1" width="6" height="11" rx="1" fill="#fff"/><path d="M1 9c0 7 10 7 10 0M6 14v3M3 17h6" stroke="#fff" fill="none"/></svg>
      <svg width="18" height="14" viewBox="0 0 18 14" fill="none" stroke="#fff" stroke-width="1.200"><path d="M6 4h10v8H4M17 6.500v3M1.500 3h5v3q-2.500 3-5 0zM3 1v2M5 1v2M4 8v4"/><rect x="8" y="6" width="5" height="4" fill="#fff"/></svg>
      <svg width="16" height="15" viewBox="0 0 16 15" fill="none" stroke="#fff" stroke-width="1.200"><path d="M1 14C1 6 7 1 14 1M4 14c0-6 4-10 10-10M7 14c0-4 3-7 7-7M10 14c0-2 2-4 4-4"/><circle cx="13" cy="13" r="1" fill="#fff"/></svg>
      <svg width="18" height="15" viewBox="0 0 18 15" fill="none" stroke="#fff" stroke-width="1.200"><path d="M1 5h2l4-4v13l-4-4H1zM9 5q2 2.500 0 5M11.500 3q3.500 4.500 0 9M14 1q5 6.500 0 13"/></svg>
      <div class="clock"><span data-w="42">1:28 PM</span><span data-w="46">9/4/2023</span></div>
      <svg class="ac" width="18" height="17" viewBox="0 0 18 17" fill="none" stroke="#fff" stroke-width="1.300"><path d="M1 1h16v12h-6l-2 2.500L7 13H1z"/></svg>
      <b class="peek"></b>
    </div>
  </div>
</div>
<div class="side side-right"><div class="badge"><span class="lillah" lang="ar">لِلّٰهِ</span><span class="hamd" lang="ar">اَلْحَمْدُ</span></div></div>
</div>
<script src="script.js"></script>
</body>
</html>
```
FILE: styles.css
```css
* { box-sizing: border-box; }
body { margin: 0; font-family: "Open Sans", "Noto Sans", sans-serif; font-size: 12px; color: #1e395b; background: #4a4c4c; overflow: hidden; }
ul { list-style: none; margin: 0; padding: 0; }
svg { display: block; flex: none; }
span { white-space: pre; }
.defs { position: absolute; }
.stage { display: flex; width: 2400px; height: 1080px; }
.side { width: 240px; flex: none; }
.side-left { background: linear-gradient(180deg, #474c50 0, #3c464e 45%, #343f48 75%, #3e464c 100%); }
.side-right { background: linear-gradient(180deg, #4a4a49, #515250 50%, #4b4e4e); position: relative; }
.screen { width: 1920px; flex: none; display: flex; flex-direction: column; position: relative; }
.row { display: flex; align-items: center; }

.dd { flex: none; width: 0; height: 0; border: 3px solid transparent; border-top: 4px solid #5f789e; border-bottom: 0; }

/* title bar */
.titlebar { height: 26px; background: #fff; display: flex; align-items: flex-start; flex: none; color: #111; font-size: 12px; }
.qat { margin: 2px 0 0 46px; width: 87px; height: 22px; border: 1px solid #8a8f98; border-left: 0; border-radius: 4px 11px 11px 0; display: flex; align-items: center; padding-left: 6px; gap: 6px; background: linear-gradient(#fff, #f1f3f6); }
.qat .dd { margin-right: 4px; margin-left: -1px; }
.qat-more { margin: 10px 0 0 8px; width: 6px; height: 6px; border-top: 1px solid #333; position: relative; }
.qat-more::after { content: ""; position: absolute; top: 2px; left: 0; border: 3px solid transparent; border-top: 3px solid #333; border-bottom: 0; }
.context-title { margin: 4px 0 0 375px; width: 89px; height: 22px; line-height: 20px; text-align: center; background: linear-gradient(#fdf9e0, #f6e795); border-bottom: 1px solid #e5c95a; flex: none; }
.doc-title { margin-left: 161px; line-height: 27px; }
.winbtns { display: flex; gap: 34px; margin: 6px 19px 0 auto; }
.office { position: absolute; left: 3px; top: 3px; z-index: 3; }

/* tabs */
.tabs { height: 23px; flex: none; background: linear-gradient(#b7d6fd, #bfdbff); display: flex; position: relative; padding-left: 48px; color: #24477c; font-size: 12px; }
.tab { text-align: center; line-height: 26px; height: 23px; display: flex; justify-content: center; }
.tab.active { background: linear-gradient(#eef5fd, #dbe8f7); border: 1px solid #8db2e3; border-bottom: 0; border-radius: 3px 3px 0 0; margin-top: 1px; line-height: 24px; }
.t1 { width: 53px; } .t2 { width: 62px; } .t3 { width: 62px; } .t4 { width: 90px; } .t5 { width: 80px; } .t6 { width: 72px; } .t7 { width: 53px; } .t8 { width: 89px; margin-left: 3px; border: 1px solid #d8d9b8; border-width: 0 1px; }
.help { margin: 3px 3px 0 auto; }

/* ribbon */
.ribbon { height: 91px; flex: none; display: flex; gap: 4px; margin: 0 1px; padding: 2px 2px; border: 1px solid #8db2e3; border-radius: 3px; background: linear-gradient(#dbe6f4 0, #d8e4f3 15%, #c7d8eb 22%, #cfe0f1 60%, #dff0fc 88%, #e0f5fd 100%); position: relative; }
.group { height: 85px; border: 1px solid #a9c2de; border-radius: 3px; display: flex; flex-direction: column; flex: none; box-shadow: 1px 1px 0 #eef5fc; background: linear-gradient(#dfe9f5 0, #d3e0ef 20%, #cddcec 30%, #d5e4f3 80%); }
.g-clip { width: 150px; } .g-slides { width: 118px; } .g-font { width: 226px; } .g-para { width: 293px; } .g-draw { width: 345px; } .g-edit { width: 84px; }
.body { height: 69px; display: flex; padding-top: 1px; }
.cap { flex: 1; background: #c2d8f0; color: #4c6b96; line-height: 15px; display: flex; justify-content: center; position: relative; border-radius: 0 0 2px 2px; font-size: 12px; }
.launch { position: absolute; right: 4px; top: 4px; width: 7px; height: 7px; border: 1px solid #6d8cb8; border-right-color: transparent; border-bottom-color: transparent; }
.launch::after { content: ""; position: absolute; right: -2px; bottom: -2px; width: 4px; height: 4px; border: 1px solid #6d8cb8; border-left: 0; border-top: 0; }
.big { display: flex; flex-direction: column; align-items: center; line-height: 13px; width: 46px; margin-left: 1px; padding-top: 3px; flex: none; }
.big > svg { margin-bottom: 4px; }
.big > .dd { margin-top: 3px; }
.big .row { gap: 4px; padding-left: 4px; }
.col { display: flex; flex-direction: column; }
.cmd { height: 22px; display: flex; align-items: center; line-height: 22px; }
.cmd span { margin-left: 3px; }
.cmd .dd { margin-left: 4px; }
.off { color: #8d96a6; }
.g-clip .col { margin-left: 1px; }
.stack { display: block; }
.r1 { height: 21px; margin-top: 8px; }
.r2 { height: 21px; margin-top: 8px; }
.stack.body { padding-left: 3px; }
.bg { height: 21px; border: 1px solid #a3b9d6; border-radius: 3px; background: linear-gradient(#e1eaf5, #cfdeef 50%, #dbe8f5); display: flex; align-items: center; flex: none; }
.combo { height: 21px; border: 1px solid #b2c5de; background: #f1f6fc; display: flex; align-items: center; justify-content: space-between; padding: 0 3px; color: #111; }
.c-name { width: 104px; } .c-size { width: 39px; margin-left: 1px; }
.bg-a { width: 45px; margin-left: 3px; justify-content: space-around; } .bg-clr { width: 24px; margin-left: 3px; padding-left: 3px; }
.ser { font-family: "Liberation Serif", serif; font-weight: bold; color: #2b3a52; font-size: 14px; line-height: 18px; position: relative; }
.a1 { font-size: 17px; } .a2 { font-size: 14px; }
.up { position: absolute; top: 1px; right: -5px; border: 2px solid transparent; border-bottom: 3px solid #3f5f96; border-top: 0; }
.up.dn { border-bottom: 0; border-top: 3px solid #3f5f96; }
.tinyAa { font: bold 7px "Liberation Sans", sans-serif; fill: #222; }
.bg-style { width: 181px; padding: 0 3px 0 6px; justify-content: space-between; }
.it { font-style: italic; } .un { text-decoration: underline; } .st { text-decoration: line-through; font-size: 12px; letter-spacing: -.5px; } .sh { text-shadow: 2px 1px 1px #8a93a3; }
.av { display: flex; flex-direction: column; align-items: center; } .av .ser { font-size: 10px; line-height: 9px; letter-spacing: -1px; }
.bg-style .dd { margin-left: -7px; }
.bg-color { width: 35px; margin-left: 4px; justify-content: space-between; padding: 0 3px; }
.fc { width: 16px; height: 17px; border-bottom: 4px solid #cf1f26; text-align: center; } .fc .ser { line-height: 13px; font-size: 14px; display: block; }
.g-para .stack { width: 151px; padding-left: 3px; }
.hot { height: 19px; background: linear-gradient(#fbdba2, #f6b765 50%, #fcd98e); display: flex; align-items: center; padding: 0 2px; border-radius: 2px; align-self: center; }
.p1 { width: 68px; justify-content: space-between; padding-right: 4px; } .p2 { width: 46px; margin-left: 3px; justify-content: space-around; } .p3 { width: 33px; margin-left: 3px; justify-content: space-between; padding: 0 3px; }
.p4 { width: 93px; justify-content: space-between; padding-right: 2px; } .p5 { width: 33px; margin-left: 4px; justify-content: space-between; padding: 0 3px; }
.g-para .col { margin-left: 4px; }
.gallery { display: flex; width: 137px; height: 60px; margin: 4px 0 0 4px; border: 1px solid #b2c5de; background: #d9e6f4; flex: none; }
.gscroll { width: 13px; border-left: 1px solid #b2c5de; display: flex; flex-direction: column; }
.gscroll div { flex: 1; display: flex; align-items: center; justify-content: center; background: linear-gradient(#e6eff9, #c9dbef); border-bottom: 1px solid #b2c5de; }
.ga { border: 3px solid transparent; border-top: 0; border-bottom: 4px solid #a5b3c8; }
.bar { position: relative; } .bar::before { content: ""; position: absolute; left: -3px; top: -7px; width: 6px; height: 1px; background: #5f789e; }
.arr { margin-left: 2px; } .qs { margin-left: 0; width: 48px; }
.qs .row { padding-left: 5px; }
.g-draw .col { margin-left: -4px; }
.g-edit .col { margin-left: 6px; }
.ab { font: bold 9px "Liberation Sans", sans-serif; fill: #333; } .ab.g { fill: #2c6a3c; }

/* workspace */
.work { height: 878px; flex: none; display: flex; background: #b3d0f5; padding-top: 2px; }
.pane { width: 290px; display: flex; flex-direction: column; }
.pane-tabs { height: 20px; background: linear-gradient(#a9c8f5, #c3d9f9); border-bottom: 1px solid #7d9fd0; position: relative; display: flex; font-size: 12px; line-height: 20px; color: #0f2c5c; }
.ptbg { position: absolute; left: 0; top: 0; }
.pane-tabs span { position: relative; }
.pt-on { font-weight: bold; margin-left: 8px; color: #0a1d4a; } .pt-off { margin-left: 26px; }
.pclose { margin: 6px 6px 0 auto; }
.pane-body { flex: 1; display: flex; background: linear-gradient(#b2cdf3 0, #8db2e1 8%, #7ba1d1 24%, #6b92c5 45%, #5a81b7 68%, #658fca 100%); }
.thumbs { width: 275px; padding-top: 4px; }
.trow { height: 193px; margin: 0 3px 4px; padding-top: 5px; display: flex; width: 269px; }
.trow.sel { border: 1px solid #d9913e; box-shadow: 0 0 0 1px #f0bd76; background: linear-gradient(#fbe0b4 0, #f4bf73 35%, #eb9f38 36%, #f1ab48 100%); padding-top: 4px; }
.num { width: 21px; font: bold 10px/18px "DejaVu Sans", sans-serif; text-align: center; color: #f1f6ff; text-shadow: 1px 1px 1px #33507e; padding-top: 2px; letter-spacing: -.5px; }
.thumb { width: 243px; height: 183px; background: #fff; border: 1px solid #5d7394; box-shadow: 1px 2px 3px #33466b; position: relative; font-family: Lato, sans-serif; color: #111; overflow: hidden; flex: none; }
.sel .num { width: 20px; padding-right: 4px; }
.tt { position: absolute; left: 12px; top: 8px; width: 217px; height: 31px; background: #000; color: #fff; font-size: 12px; line-height: 30px; padding-left: 5px; }
.th11 .tt { left: 10px; top: 9px; padding-left: 9px; }
.red { position: absolute; left: 13px; top: 52px; width: 119px; height: 9px; background: #b5504f; color: #fff; font-size: 6px; line-height: 8px; padding-left: 1px; }
.grid9 { position: absolute; left: 12px; top: 71px; width: 217px; height: 106px; border: 1px solid #000; background: linear-gradient(#efefef, #bcbcbc); display: grid; grid-template-columns: 67px 56px 48px 1fr; grid-auto-rows: 21.5px; font-size: 5.8px; line-height: 10px; padding-left: 2px; color: #333; }
.b1l { margin-left: -8px; }
.th10 span { position: absolute; font-size: 13.500px; line-height: 20px; }
.l1 { left: 50px; top: 13px; } .l2 { left: 32px; top: 58px; } .l3 { left: 19px; top: 102px; }
.ml { position: absolute; left: 12px; top: 43px; width: 220px; height: 62px; border: 1px solid #000; padding: 1px 0 0 8px; font-size: 5.7px; line-height: 7.2px; color: #222; }
.ml li { white-space: pre; position: relative; }
.ml li::before { content: ""; position: absolute; left: -6px; top: 2px; border: 2px solid transparent; border-left: 3px solid #222; border-right: 0; }
.ml.m2 { top: 139px; height: 40px; }
.tt2 { position: absolute; left: 12px; top: 107px; width: 220px; height: 30px; background: #000; color: #fff; font-size: 7px; line-height: 28px; padding-left: 51px; }

.vscroll { background: linear-gradient(90deg, #6f94c4, #84a6d2); border-left: 1px solid #b3cdf2; display: flex; flex-direction: column; align-items: center; }
.ar { border: 4.500px solid transparent; flex: none; }
.up2 { border-top: 0; border-bottom: 5px solid #3c5c8f; margin-top: 5px; } .dn2 { border-bottom: 0; border-top: 5px solid #3c5c8f; margin-bottom: 5px; }
.vthumb { background: linear-gradient(90deg, #e8f1fc, #c3d7f1); border: 1px solid #53719f; width: 13px; display: flex; align-items: center; justify-content: center; }
.vthumb::after { content: ""; width: 7px; height: 8px; background: repeating-linear-gradient(#5a7299 0 1px, transparent 1px 2.4px); }
.pv { width: 15px; } .pv .vthumb { margin-top: 666px; height: 164px; } .pv .dn2 { margin-top: auto; }
.vsplit { width: 5px; border-right: 1px solid #7d9fd0; border-left: 1px solid #dbe9fb; }
.right { flex: 1; display: grid; grid-template-columns: 1609px 16px; grid-template-rows: 824px 6px 46px; }
.canvas { background: linear-gradient(#a5c2ea 0, #97b8e3 7%, #84a7d6 22%, #7a9ccc 36%, #6b8fc1 52%, #5b82b8 68%, #5379ae 78%, #5783b9 88%, #608cc4 100%); position: relative; overflow: hidden; }
.swoosh { position: absolute; left: 0; top: 0; }
.hsplit { grid-column: 1 / 3; background: #b3d0f5; border-top: 1px solid #e2effd; border-bottom: 1px solid #7392c2; }
.notes { background: #fff; font-size: 15px; line-height: 30px; color: #111; padding-left: 10px; font-family: "Open Sans", sans-serif; }
.mv .vthumb { width: 15px; height: 53px; margin-top: 647px; } .mv .dn2 { margin-top: auto; } .nav { background: #a9c6f1; width: 15px; height: 48px; display: flex; justify-content: center; padding-top: 1px; }
.nv { justify-content: space-between; opacity: .9; } .nv .ar { opacity: .6; }

/* slide */
.slide { position: absolute; left: 275px; top: 15px; width: 1060px; height: 795px; background: #fff; box-shadow: 3px 3px 6px #2f4a75, 0 0 3px #5a759f; font-family: Lato, sans-serif; color: #0b0b0b; }
.s-title { position: absolute; left: 61px; top: 26px; width: 939px; height: 89px; background: #000; color: #fff; font-weight: bold; font-size: 38px; line-height: 44px; padding: 36px 0 0 11px; }
.s-h { position: absolute; top: 135px; font-size: 47px; line-height: 54px; color: #000; }
.h1 { left: 66px; } .h2 { left: 419px; } .h3 { left: 740px; }
.box { position: absolute; top: 203px; height: 578px; border: 1px solid #000; background: linear-gradient(#f0f0f0, #d8d8d8 40%, #bcbcbc); padding: 2px 0 0 12px; font-size: 19px; box-shadow: 0 2px 3px #999; }
.b1 { left: 53px; width: 310px; } .b2 { left: 380px; width: 319px; padding-left: 11px; } .b3 { left: 733px; width: 293px; font-size: 23px; padding-top: 5px; }
.box li { display: flex; height: 29.700px; line-height: 29.700px; }
.box i { flex: none; width: 14px; height: 13px; margin-top: 7px; border: 1.500px solid #000; box-shadow: 1.500px 2px 0 #000; border-radius: 1px; }
.b1 span { margin-left: 23px; } .b1 .n2 { margin-left: 28px; } .b1 .n3 { margin-left: 33px; }
.b2 span { margin-left: 6px; } .b2 .n1 { margin-left: 11px; } 
.b2 .cont { height: 24.800px; line-height: 20.800px; } .b2 .cont span { margin-left: -1px; }
.caret { width: 1px; height: 24px; background: #000; margin: -2px 0 0 0; }
.b3 li { height: 31.800px; line-height: 31.800px; }
.b3 i { width: 18px; height: 17px; margin-top: 5px; }
.b3 span { margin-left: 9px; } .b3 .n2 { margin-left: 14px; } .b3 .n3 { margin-left: 20px; } .b3 .n4 { margin-left: 25px; }
.box u {
  text-decoration: none;
  background:
    repeating-linear-gradient(90deg, #b23a4a 0 2px, transparent 2px 4px) 0 calc(100% - 1px) / 100% 1px no-repeat,
    repeating-linear-gradient(90deg, transparent 0 2px, #b23a4a 2px 4px) 0 100% / 100% 1px no-repeat;
}
.handles { position: absolute; left: 369px; top: 169px; }
.mini { transform: scale(.2285); transform-origin: 0 0; left: 0; top: 0; box-shadow: none; }
.mini .box { border-width: 4.400px; box-shadow: none; } .mini .box i { border-width: 3px; } .mini .box u { background: none; }

/* status bar */
.status { height: 23px; flex: none; display: flex; background: linear-gradient(#e3eefc 0, #cfe0f7 45%, #b4cdf0 50%, #cfe1fa 100%); border-top: 1px solid #567db1; line-height: 21px; color: #15305e; margin-top: -1px; position: relative; }
.status > div { border-right: 1px solid #9db8de; box-shadow: 1px 0 0 #eef5fe; flex: none; }
.s1 { width: 87px; padding-left: 8px; } .s2 { width: 94px; padding-left: 9px; } .s3 { width: 33px; padding: 2px 0 0 7px; } .s4 { width: 71px; padding-left: 9px; }
.status .s5 { margin-left: auto; width: 271px; background: linear-gradient(#b9d1f5 0, #9fbfec 45%, #7ea4de 50%, #a4c4f1 100%); display: flex; align-items: center; border-left: 1px solid #5b7fb5; border-right: 0; }
.views { display: flex; margin-left: 5px; border: 1px solid #6f8dbd; border-radius: 2px; }
.views div { width: 18px; height: 16px; background: #dce4f0; display: flex; align-items: center; justify-content: center; border-right: 1px solid #b3bfd3; } .views .von { background: linear-gradient(#fbe6a8, #f5cf6a); }
.pct { width: 27px; margin: 0 8px 0 9px; color: #1c3a70; }
.fitico { margin-left: 7px; }

/* taskbar */
.taskbar { height: 40px; flex: none; display: flex; background: linear-gradient(90deg, #20363f 0, #1f333d 45%, #1c2c3b 75%, #1a2540 100%); color: #fff; }
.start { width: 48px; display: flex; align-items: center; justify-content: center; }
.search { width: 288px; background: #f1f1f1; border: 1px solid #bbb; color: #333; display: flex; align-items: center; padding-left: 10px; font-size: 14.500px; }
.search span { margin-left: 9px; } .search .ill { margin-left: auto; }
.app { width: 49px; display: flex; align-items: center; justify-content: center; border-bottom: 3px solid transparent; background-clip: padding-box; flex: none; }
.app.on { background: linear-gradient(#7db2e4, #7db2e4) center bottom / 40px 2px no-repeat border-box; }
.app.cur { background: linear-gradient(#7db2e4, #7db2e4) center bottom / 49px 2px no-repeat border-box, #465960; }
.tray { margin-left: auto; display: flex; align-items: center; height: 40px; gap: 10px; width: 256px; }
.clock { font-size: 12px; line-height: 18px; display: flex; flex-direction: column; align-items: center; width: 48px; }
.tray .ac { margin-left: 7px; }
.peek { width: 1px; height: 40px; background: #5d6a7c; margin-left: 9px; }

/* round emblem on the right margin */
.badge { position: absolute; left: 103px; top: 943px; width: 99px; height: 99px; border-radius: 50%; background: #cdcdcd; color: #141414; font: bold 24px/30px "DejaVu Sans", sans-serif; }
.badge span { position: absolute; transform-origin: 0 0; }
.hamd { left: 39px; top: 14px; transform: scale(.74, 2) skewX(-6deg); }
.lillah { left: 11px; top: 14px; transform: scale(1, 2) skewX(-4deg); }
```
FILE: script.js
```js
// Tracks each text run so that it fills the width its label calls for.
document.querySelectorAll('[data-w]').forEach(function (el) {
  var range = document.createRange();
  range.selectNodeContents(el);
  var natural = range.getBoundingClientRect().width;
  var count = el.textContent.length;
  el.style.letterSpacing = ((parseFloat(el.dataset.w) - natural) / count).toFixed(3) + 'px';
});

// The twelfth thumbnail is a scaled copy of the open slide.
var copy = document.getElementById('slide').cloneNode(true);
copy.removeAttribute('id');
copy.classList.add('mini');
copy.querySelectorAll('.handles, .caret').forEach(function (n) { n.remove(); });
document.getElementById('mini').appendChild(copy);
```
